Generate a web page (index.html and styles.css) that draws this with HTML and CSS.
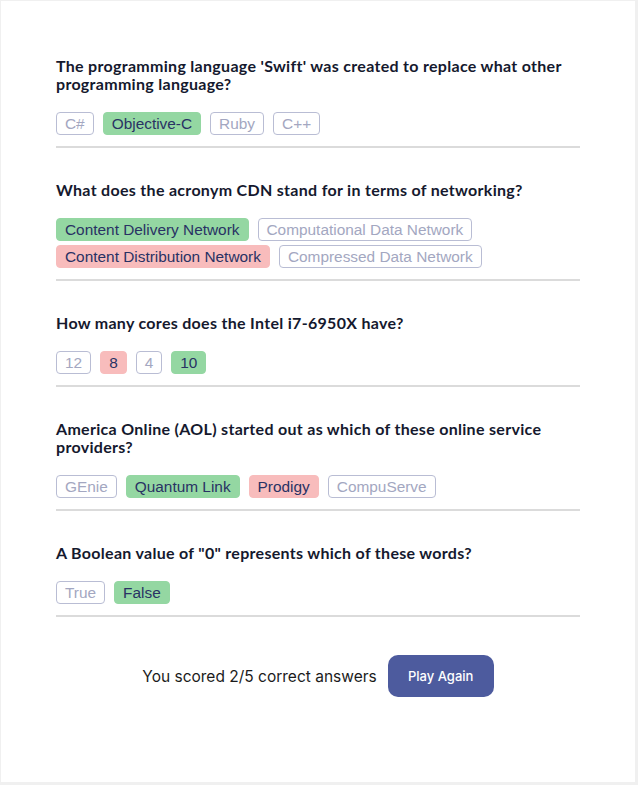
FILE: index.html
```html
<!DOCTYPE html>
<html>
<head>
<meta charset="utf-8">
<link rel="stylesheet" href="styles.css">
</head>
<body>
<main class="card">
  <section class="question">
    <h2 class="q-title">The programming language 'Swift' was created to replace what other programming language?</h2>
    <div class="options">
      <span class="opt">C#</span>
      <span class="opt correct">Objective-C</span>
      <span class="opt">Ruby</span>
      <span class="opt">C++</span>
    </div>
  </section>
  <section class="question">
    <h2 class="q-title">What does the acronym CDN stand for in terms of networking?</h2>
    <div class="options">
      <span class="opt correct">Content Delivery Network</span>
      <span class="opt">Computational Data Network</span>
      <span class="opt wrong">Content Distribution Network</span>
      <span class="opt">Compressed Data Network</span>
    </div>
  </section>
  <section class="question">
    <h2 class="q-title">How many cores does the Intel i7-6950X have?</h2>
    <div class="options">
      <span class="opt">12</span>
      <span class="opt wrong">8</span>
      <span class="opt">4</span>
      <span class="opt correct">10</span>
    </div>
  </section>
  <section class="question">
    <h2 class="q-title">America Online (AOL) started out as which of these online service providers?</h2>
    <div class="options">
      <span class="opt">GEnie</span>
      <span class="opt correct">Quantum Link</span>
      <span class="opt wrong">Prodigy</span>
      <span class="opt">CompuServe</span>
    </div>
  </section>
  <section class="question">
    <h2 class="q-title">A Boolean value of "0" represents which of these words?</h2>
    <div class="options">
      <span class="opt">True</span>
      <span class="opt correct">False</span>
    </div>
  </section>
  <div class="result">
    <p class="score">You scored 2/5 correct answers</p>
    <button class="again">Play Again</button>
  </div>
</main>
</body>
</html>
```
FILE: styles.css
```css
* { box-sizing: border-box; }
html, body { margin: 0; padding: 0; }
body {
  background: #f0f0f0;
  padding: 1px 3px 3px 1px;
}
.card {
  background: #ffffff;
  height: 781px;
  padding: 56px 55px 0 55px;
}
.question {
  border-bottom: 2px solid #dbdbdb;
  padding-bottom: 11px;
  margin-bottom: 33px;
}
.q-title {
  margin: 0 0 19px 0;
  font-family: Lato, sans-serif;
  font-weight: 700;
  font-size: 16px;
  line-height: 18px;
  color: #15192e;
  letter-spacing: 0.3px;
}
.options {
  display: flex;
  flex-wrap: wrap;
  gap: 4px 9px;
}
.opt {
  font-family: "Liberation Sans", Arial, sans-serif;
  font-size: 15.4px;
  line-height: 21px;
  padding: 0 8px;
  border: 1px solid #b9bdd4;
  border-radius: 4px;
  color: #a3a7c1;
}
.opt.correct {
  background: #94d7a2;
  border-color: #94d7a2;
  color: #293264;
}
.opt.wrong {
  background: #f8bcbc;
  border-color: #f8bcbc;
  color: #293264;
}
.result {
  display: flex;
  justify-content: center;
  align-items: center;
  gap: 11px;
  margin-top: 38px;
}
.score {
  margin: 0;
  font-family: Inter, sans-serif;
  font-size: 15.5px;
  color: #1b1b1b;
}
.again {
  width: 106px;
  height: 42px;
  border: none;
  border-radius: 10px;
  background: #4d5b9e;
  color: #ffffff;
  font-family: Inter, sans-serif;
  font-size: 13px;
  font-weight: 500;
}
```
